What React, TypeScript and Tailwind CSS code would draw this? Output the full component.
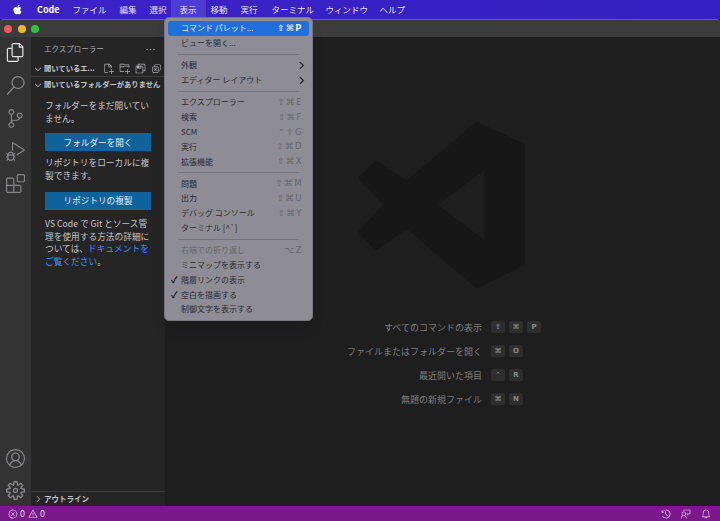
import { FaApple } from 'react-icons/fa'
import {
  VscAccount,
  VscBell,
  VscChevronDown,
  VscChevronRight,
  VscCloseAll,
  VscDebugAlt,
  VscEllipsis,
  VscError,
  VscExtensions,
  VscFeedback,
  VscFiles,
  VscHistory,
  VscNewFile,
  VscNewFolder,
  VscSaveAll,
  VscSearch,
  VscSettingsGear,
  VscSourceControl,
  VscWarning,
} from 'react-icons/vsc'

const font = { fontFamily: '"Noto Sans CJK JP", "Liberation Sans", sans-serif' }

type MenuItem = {
  label: string
  shortcut?: string
  checked?: boolean
  disabled?: boolean
  active?: boolean
  submenu?: boolean
}

const menuGroups: MenuItem[][] = [
  [{ label: 'コマンド パレット...', shortcut: '⇧⌘P', active: true }, { label: 'ビューを開く...' }],
  [
    { label: '外観', submenu: true },
    { label: 'エディター レイアウト', submenu: true },
  ],
  [
    { label: 'エクスプローラー', shortcut: '⇧⌘E' },
    { label: '検索', shortcut: '⇧⌘F' },
    { label: 'SCM', shortcut: '⌃⇧G' },
    { label: '実行', shortcut: '⇧⌘D' },
    { label: '拡張機能', shortcut: '⇧⌘X' },
  ],
  [
    { label: '問題', shortcut: '⇧⌘M' },
    { label: '出力', shortcut: '⇧⌘U' },
    { label: 'デバッグ コンソール', shortcut: '⇧⌘Y' },
    { label: 'ターミナル [^`]' },
  ],
  [
    { label: '右端での折り返し', shortcut: '⌥Z', disabled: true },
    { label: 'ミニマップを表示する' },
    { label: '階層リンクの表示', checked: true },
    { label: '空白を描画する', checked: true },
    { label: '制御文字を表示する' },
  ],
]

const shortcuts = [
  { label: 'すべてのコマンドの表示', keys: ['⇧', '⌘', 'P'] },
  { label: 'ファイルまたはフォルダーを開く', keys: ['⌘', 'O'] },
  { label: '最近開いた項目', keys: ['⌃', 'R'] },
  { label: '無題の新規ファイル', keys: ['⌘', 'N'] },
]

const MenuRow = ({ item }: { item: MenuItem }) => (
  <div
    className={`relative flex h-[14.8px] items-center justify-between pl-[13px] pr-[6px] ${
      item.active
        ? 'rounded-[3px] bg-[#1f6fdc] text-[#e8ecf8]'
        : item.disabled
          ? 'text-[#65646c]'
          : 'text-[#2b2a30]'
    }`}
  >
    {item.checked && <span className="absolute left-[3px] text-[9px] font-bold text-[#111]">✓</span>}
    <span className="whitespace-nowrap">{item.label}</span>
    {item.shortcut && (
      <span
        className={`font-['DejaVu_Sans'] text-[8.5px] tracking-[1.5px] ${item.active ? 'font-bold text-[#e8ecf8]' : item.disabled ? 'text-[#65646c]' : 'text-[#66656d]'}`}
      >
        {item.shortcut}
      </span>
    )}
    {item.submenu && <VscChevronRight className="-mr-[4px] h-[11px] w-[11px] stroke-1 text-[#1c1c20]" />}
  </div>
)

const ViewMenu = () => (
  <div className="absolute left-[164px] top-[17px] z-10 w-[149px] rounded-[5px] border border-[#77767f] bg-[#8e8d96] px-[3px] pb-[3px] pt-[3px] text-[8px] leading-none shadow-lg">
    {menuGroups.map((group, i) => (
      <div key={i}>
        {i > 0 && <div className="mx-[10px] my-[3.2px] h-px bg-[#75747c]" />}
        {group.map((item) => (
          <MenuRow key={item.label} item={item} />
        ))}
      </div>
    ))}
  </div>
)

const MenuBar = () => (
  <div className="flex h-[19px] shrink-0 items-center bg-[linear-gradient(90deg,#3c22c6,#3420c2)] pl-[12px] text-[8.5px] text-[#e4e0f6]">
    <FaApple className="h-[11px] w-[11px] text-white" />
    <span className="ml-[14px] text-[9px] font-bold text-white">Code</span>
    <span className="ml-[13px] w-[45px]">ファイル</span>
    <span className="ml-[2px] w-[30px]">編集</span>
    <span className="w-[21px]">選択</span>
    <span className="flex h-full w-[35px] items-center justify-center bg-[#4d3cd0]">表示</span>
    <span className="ml-[5px] w-[30px]">移動</span>
    <span className="w-[31px]">実行</span>
    <span className="w-[54px]">ターミナル</span>
    <span className="w-[54px]">ウィンドウ</span>
    <span>ヘルプ</span>
  </div>
)

const ActivityBar = () => (
  <div className="flex w-[31px] shrink-0 flex-col items-center bg-[#333333] text-[#85858a]">
    <VscFiles className="mt-[6px] h-[19px] w-[19px] text-[#e4e4e4]" />
    <VscSearch className="mt-[14px] h-[19px] w-[19px]" />
    <VscSourceControl className="mt-[14px] h-[19px] w-[19px]" />
    <VscDebugAlt className="mt-[14px] h-[19px] w-[19px]" />
    <VscExtensions className="mt-[13px] h-[19px] w-[19px]" />
    <VscAccount className="mt-auto h-[19px] w-[19px]" />
    <VscSettingsGear className="mb-[6px] mt-[13px] h-[19px] w-[19px]" />
  </div>
)

const Sidebar = () => (
  <div className="flex w-[134px] shrink-0 flex-col bg-[#252526] text-[8.5px] leading-none text-[#c6c6c8]">
    <div className="flex h-[24px] items-center justify-between pl-[13px] pr-[9px] text-[7.5px] text-[#aaaaac]">
      <span>エクスプローラー</span>
      <VscEllipsis className="h-[11px] w-[11px]" />
    </div>
    <div className="flex h-[16px] items-center border-b border-[#3b3b3d] pl-[2px] text-[7.3px] font-bold">
      <VscChevronDown className="h-[10px] w-[10px]" />
      <span className="ml-[1px] w-[59px] whitespace-nowrap">開いているエ...</span>
      <span className="flex gap-[5px] text-[#b5b5b8]">
        <VscNewFile className="h-[11px] w-[11px]" />
        <VscNewFolder className="h-[11px] w-[11px]" />
        <VscSaveAll className="h-[11px] w-[11px]" />
        <VscCloseAll className="h-[11px] w-[11px]" />
      </span>
    </div>
    <div className="flex h-[16px] items-center whitespace-nowrap pl-[2px] text-[7.3px] font-bold">
      <VscChevronDown className="h-[10px] w-[10px]" />
      <span className="ml-[1px]">開いているフォルダーがありません</span>
    </div>
    <div className="flex flex-col px-[14px] pt-[7px] text-[8.7px] leading-[12.7px]">
      <p>フォルダーをまだ開いていません。</p>
      <div className="mt-[8px] flex h-[18px] items-center justify-center bg-[#0e639c] text-[8.6px] text-[#e8eef4]">フォルダーを開く</div>
      <p className="mt-[6px]">リポジトリをローカルに複製できます。</p>
      <div className="mt-[9px] flex h-[18px] items-center justify-center bg-[#0e639c] text-[8.6px] text-[#e8eef4]">リポジトリの複製</div>
      <p className="mt-[8px]">
        VS Code で Git とソース管理を使用する方法の詳細については、<span className="text-[#3794ff]">ドキュメントをご覧ください</span>。
      </p>
    </div>
    <div className="mt-auto flex h-[15px] items-center border-t border-[#3b3b3d] pl-[2px] text-[7.5px] font-bold">
      <VscChevronRight className="h-[10px] w-[10px]" />
      <span className="ml-[1px]">アウトライン</span>
    </div>
  </div>
)

const Watermark = () => (
  <svg viewBox="0 0 167 166" className="mx-auto mt-[85px] h-[166px] w-[167px] shrink-0 text-[#171717]">
    <path
      fill="currentColor"
      fillRule="evenodd"
      stroke="currentColor"
      strokeWidth="6"
      strokeLinejoin="round"
      d="M118 3 L163 24 V141 L118 163 L48 103 L17 125 L3 110 L28 83 L3 56 L17 42 L48 62 Z M128 42 L74 83 L128 124 Z"
    />
  </svg>
)

const Editor = () => (
  <div className="flex min-w-0 flex-1 flex-col bg-[#1e1e1e]">
    <Watermark />
    <div className="mt-[31px] grid grid-cols-[317px_1fr] gap-x-[9px] gap-y-[8px] text-[9px] leading-none text-[#7d7d7d]">
      {shortcuts.map((s) => (
        <div key={s.label} className="contents">
          <span className="flex h-[16px] items-center justify-end whitespace-nowrap">{s.label}</span>
          <span className="flex gap-[4px]">
            {s.keys.map((k, i) => (
              <span
                key={i}
                className="flex h-[12px] w-[14px] items-center justify-center self-center rounded-[2px] bg-[#2e2e2e] font-['DejaVu_Sans'] text-[7px] font-bold text-[#8a8a8a]"
              >
                {k}
              </span>
            ))}
          </span>
        </div>
      ))}
    </div>
  </div>
)

const StatusBar = () => (
  <div className="flex h-[15px] shrink-0 items-center bg-[#7a1a8a] px-[8px] text-[9px] text-[#e6d4ea]">
    <VscError className="h-[10px] w-[10px]" />
    <span className="ml-[2px]">0</span>
    <VscWarning className="ml-[3px] h-[10px] w-[10px]" />
    <span className="ml-[2px]">0</span>
    <span className="ml-auto flex gap-[10px] pr-[1px]">
      <VscHistory className="h-[10px] w-[10px]" />
      <VscFeedback className="h-[10px] w-[10px]" />
      <VscBell className="h-[10px] w-[10px]" />
    </span>
  </div>
)

export default function App() {
  return (
    <div className="relative flex h-[521px] w-[720px] flex-col overflow-hidden bg-[#1e1e1e]" style={font}>
      <MenuBar />
      <div className="flex h-[18px] shrink-0 items-center gap-[5.5px] rounded-t-[4px] border-t border-[#66626e] bg-[#3c3c3c] pl-[4px]">
        <span className="h-[8px] w-[8px] rounded-full bg-[#f05a50]" />
        <span className="h-[8px] w-[8px] rounded-full bg-[#f5b52e]" />
        <span className="h-[8px] w-[8px] rounded-full bg-[#2fc440]" />
      </div>
      <div className="flex min-h-0 flex-1">
        <ActivityBar />
        <Sidebar />
        <Editor />
      </div>
      <StatusBar />
      <ViewMenu />
    </div>
  )
}
